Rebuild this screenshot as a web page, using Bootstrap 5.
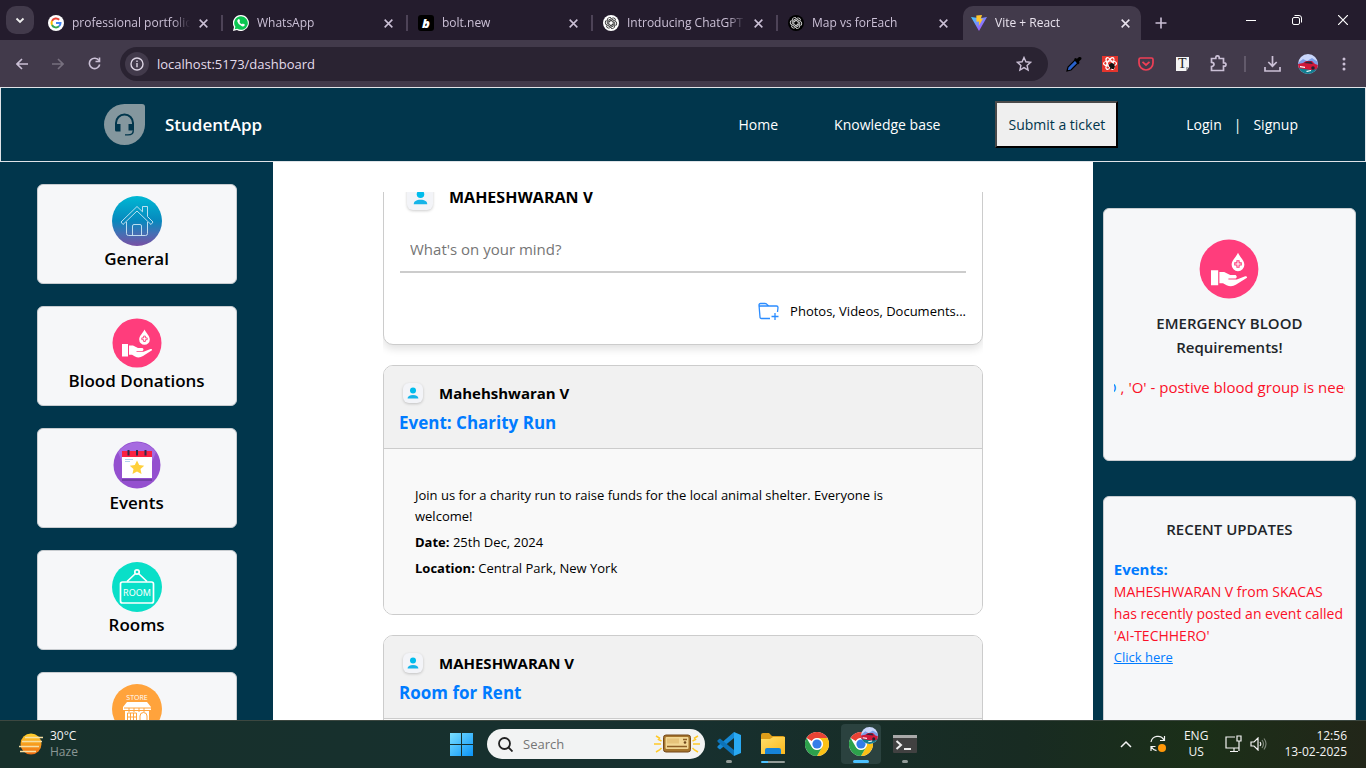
<!DOCTYPE html>
<html lang="en">
<head>
<meta charset="utf-8">
<meta name="viewport" content="width=device-width, initial-scale=1">
<title>Vite + React</title>
<link href="https://cdn.jsdelivr.net/npm/bootstrap@5.3.0/dist/css/bootstrap.min.css" rel="stylesheet">
<style>
:root{--navy:#01364c;--paper:#f6f7f9;--lilac:#cbc0d6;--link:#007bff}
body{font-family:"Open Sans","Noto Sans",sans-serif;font-size:15px;line-height:24px;color:#000}
button{padding:0;border:0;background:none;color:inherit;display:flex;align-items:center;justify-content:center;flex:none}
svg{display:block;flex:none}
/* browser tabs */
.tabstrip{height:40px;flex:none;background:#241c2d;color:var(--lilac);font-size:12px;line-height:16px}
.tab-search{width:28px;height:28px;border-radius:10px;background:#423a4b;margin:6px 4px 6px 6px;color:#eee}
.browser-tab{flex:0 1 185px;min-width:0;height:34px;padding:0 14px 0 10px}
.browser-tab:nth-child(-n+4){background:linear-gradient(#4d4357,#4d4357) right center/2px 16px no-repeat}
.tab-title{flex:1;min-width:0;overflow:hidden;white-space:nowrap;margin:0 8px;-webkit-mask-image:linear-gradient(90deg,#000 85%,transparent)}
.browser-tab.current{flex-basis:178px;background:#423a4b;border-radius:10px 10px 0 0;color:#e9e3ee;padding:0 10px 0 8px}
.winbtn{width:46px;height:40px;color:#fff}
.new-tab{width:24px}
/* toolbar */
.toolbar{height:47px;flex:none;background:#423a4b;color:var(--lilac);padding-right:4px}
.toolbtn{width:36px;height:36px}
.addressbar{height:34px;border-radius:17px;background:#2a2332;padding-left:5px;margin:0 8px}
.addressbar input{background:none;border:0;outline:0;color:#e4dcec;font-size:13px;padding:0;margin-left:8px}
.site-info{width:24px;height:24px;border-radius:50%;background:#423a4b}
.bookmark{width:48px}
/* app header */
.app-header{height:75px;border:1px solid #dfe3e8;background:var(--navy);color:#fff;padding:0 67px 0 103px}
.app-header a{color:#fff;text-decoration:none}
.app-header nav{font-size:14px}
.brand{font-size:17px;font-weight:600}
.ticket{height:47px;border:2px solid;border-color:#4a4a4a #000 #000 #4a4a4a;background:#efefef;color:#01364c;padding:0 11px;margin:0 68px 0 55px}
/* columns */
.side{flex:0 0 20%;background:var(--navy);overflow:hidden}
.side-left{padding-top:22px;gap:22px}
.side-right{padding:46px 10px 0;gap:35px}
.tile{width:200px;height:100px;background:var(--paper);border:1px solid #c8ccd0;border-radius:6px;color:#000;text-decoration:none;font-size:17px;font-weight:600;padding-top:11px;gap:1px;flex:none}
.info-card{background:var(--paper);border:1px solid #c8ccd0;border-radius:6px;height:253px;padding:0 10px;flex:none}
.blood-card{padding-top:30px}
.feed-window{max-width:600px;margin-top:30px;overflow:hidden}
.feed-scroll{margin-top:-32px}
.post{border:1px solid #ccc;border-radius:10px;overflow:hidden;margin-bottom:20px}
.composer{box-shadow:0 4px 8px rgba(0,0,0,.12);padding:16px}
.composer-name{height:40px;font-size:16px;padding-left:7px}
.composer input{height:46px;border:0;border-bottom:2px solid #ccc;padding:0 10px;width:100%;margin-top:10px;outline:0}
.composer input::placeholder{color:#757575}
.attach{font-size:13px;margin-top:21px;height:34px;gap:11px}
.avatar{border-radius:6px;background:#f3f4f8;box-shadow:0 1px 3px rgba(0,0,0,.2);display:flex;align-items:center;justify-content:center}
.avatar-lg{width:26px;height:26px}
.avatar-sm{width:20px;height:20px}
.post-head{background:#f1f1f1;border-bottom:1px solid #ccc;padding:15px 15px 12px;height:83px}
.post-head h2{font-size:17px;line-height:24px;font-weight:700;color:var(--link);margin:6px 0 0}
.post-body{background:#f9f9f9;padding:36px 31px 35px;font-size:13px;line-height:21px}
.post-body p{margin:0 0 5px}
.alert-red{color:#fb1028}
.link-blue{color:var(--link)}
.ticker{overflow:hidden;white-space:nowrap}
.ticker-text{margin-left:-8px}
.update{font-size:14px;line-height:22px}
.update-link{font-size:13px;line-height:20px}
/* taskbar */
.taskbar{height:48px;background:linear-gradient(90deg,#17302b,#17302f 50%,#182b22 75%,#1b2f18 88%,#222619);box-shadow:inset 0 1px #3c4740;color:#f4f4f4;font-size:12px;line-height:16px}
.weather{flex:1;padding-left:19px;margin-right:9px;gap:7px}
.tray{flex:1;padding-right:19px;gap:17px}
.start{margin-right:14px}
.searchbox{width:218px;height:30px;border-radius:15px;background:#f2f3f3;padding:0 5px 0 11px}
.searchbox input{width:80px;border:0;background:none;font-size:13px;padding:0;outline:0;margin-left:10px}
.taskbtn{width:40px;height:40px;border-radius:4px;position:relative}
.taskbtn.active{background:#2b423f}
.taskbtn.open::after{content:"";position:absolute;bottom:1px;width:6px;height:3px;border-radius:2px;background:#929b98}
.taskbtn.active::after{width:16px;background:#4cc2ff}
.taskbtn.multi::after{width:24px;height:2px;background:linear-gradient(90deg,#4cc2ff 7px,#929b98 7px)}
</style>
</head>
<body class="vh-100 overflow-hidden d-flex flex-column">
<svg width="0" height="0" class="position-absolute" aria-hidden="true">
<defs>
<linearGradient id="houseFill" x2="0" y2="1"><stop stop-color="#00b8d4"/><stop offset=".5" stop-color="#0788bd"/><stop offset=".75" stop-color="#456fb4"/><stop offset="1" stop-color="#7850a4"/></linearGradient>
<linearGradient id="winFill" x2="1" y2="1"><stop stop-color="#7be0ff"/><stop offset="1" stop-color="#0a94f8"/></linearGradient>
<linearGradient id="viteFill" x2="1" y2="1"><stop stop-color="#41d1ff"/><stop offset="1" stop-color="#bd34fe"/></linearGradient>
<linearGradient id="sunFill" x2="0" y2="1"><stop stop-color="#ffd02b"/><stop offset="1" stop-color="#ef6c12"/></linearGradient>
<linearGradient id="folderFill" x2="1" y2="1"><stop stop-color="#ffdf6b"/><stop offset="1" stop-color="#fcb81c"/></linearGradient>
<symbol id="x" viewBox="0 0 10 10"><path d="M1.500 1.500l7 7m0-7l-7 7" stroke="currentColor" stroke-width="1.400"/></symbol>
<symbol id="person" viewBox="0 0 16 16"><circle cx="8" cy="4.600" r="4" fill="#00bcec"/><path d="M.8 15.200c0-3 2.700-4.700 7.200-4.700s7.200 1.700 7.200 4.700z" fill="#16b4e8"/></symbol>
<symbol id="blood" viewBox="0 0 50 50"><circle cx="25" cy="25" r="24.500" fill="#ff3d7c"/><path d="M10 26h6v12.500h-6zM17 27.500h4l5 2.500h4.500q2 1.500 0 3h-6v.8h7l7-2.800q2-.3 1.500 1.200l-9 5.800q-4 2.500-8 .5l-3-1.700h-3z" fill="#fff"/><path d="M32.500 11.500c2 4 5.300 6.500 5.300 10a5.300 5.300 0 0 1-10.600 0c0-3.500 3.300-6 5.300-10z" fill="#fff"/><path d="M31.600 18.100h1.800v1.800h1.800v1.800h-1.800v1.800h-1.800v-1.800h-1.800v-1.800h1.800z" fill="none" stroke="#ff3d7c" stroke-width=".9"/></symbol>
<symbol id="gpt" viewBox="0 0 16 16"><g fill="none" stroke="currentColor" stroke-width=".9"><path id="gp" d="M8 2.700c-2-.8-3.800.5-3.700 2.300v3.400L8 10.500"/><use href="#gp" transform="rotate(60 8 8)"/><use href="#gp" transform="rotate(120 8 8)"/><use href="#gp" transform="rotate(180 8 8)"/><use href="#gp" transform="rotate(240 8 8)"/><use href="#gp" transform="rotate(300 8 8)"/></g></symbol>
<symbol id="chrome" viewBox="0 0 24 24"><circle cx="12" cy="12" r="12" fill="#fff"/><path d="M1.600 6A12 12 0 0 1 22.400 6H12a6 6 0 0 0-5.200 3z" fill="#e94335"/><path d="M22.400 6A12 12 0 0 1 12 24l5.200-9A6 6 0 0 0 12 6z" fill="#fbc116"/><path d="M1.600 6l5.200 9a6 6 0 0 0 10.400 0L12 24A12 12 0 0 1 1.600 6z" fill="#2da14c"/><circle cx="12" cy="12" r="5.800" fill="#fff"/><circle cx="12" cy="12" r="4.600" fill="#347de9"/></symbol>
<symbol id="car" viewBox="0 0 20 20"><clipPath id="round"><circle cx="10" cy="10" r="10"/></clipPath><g clip-path="url(#round)"><path fill="#c9d6fb" d="M0 0h20v20H0z"/><path fill="#7d9de6" d="M0 9l5-4 4 2 5-3 6 4v4H0z"/><path fill="#127e91" d="M0 13h20v7H0z"/><path fill="#d0183a" d="M0 10l5-1 3-2h6l3 3 3 1v4l-7 1-13-2z"/><path fill="#26283f" d="M6 9l3-1.500h4l2 2.500z"/><path fill="#fff" d="M2 12l5 .7v1.300l-5-.7zM8 17l5-1v1l-4 1z"/><circle cx="15" cy="14" r="1.800" fill="#202334"/></g></symbol>
</defs>
</svg>

<div class="tabstrip d-flex align-items-end">
  <button class="tab-search" aria-label="Search tabs"><svg width="12" height="12"><path d="M2.500 4.500L6 8l3.500-3.500" fill="none" stroke="currentColor" stroke-width="1.800"/></svg></button>
  <div class="d-flex flex-grow-1">
    <div class="browser-tab d-flex align-items-center"><svg width="16" height="16" viewBox="0 0 16 16"><circle cx="8" cy="8" r="8" fill="#fff"/><g fill="none" stroke-width="2"><path d="M11.200 4.800A4.500 4.500 0 0 0 4 6" stroke="#ea4335"/><path d="M4 6a4.500 4.500 0 0 0 0 4" stroke="#fbbc05"/><path d="M4 10a4.500 4.500 0 0 0 7 1.300" stroke="#34a853"/><path d="M11 11.300A4.500 4.500 0 0 0 12.500 8H8" stroke="#4285f4"/></g></svg><span class="tab-title">professional portfolio</span><button aria-label="Close tab"><svg width="11" height="11"><use href="#x"/></svg></button></div>
    <div class="browser-tab d-flex align-items-center"><svg width="16" height="16" viewBox="0 0 16 16"><path d="M8 0a8 8 0 1 1-4 15L0 16l1-4A8 8 0 0 1 8 0z" fill="#fff"/><path d="M8 1.200A6.800 6.800 0 1 1 4.300 13.700L1.700 14.300l.7-2.500A6.800 6.800 0 0 1 8 1.200z" fill="#0bc651"/><path d="M5.200 4.200l1-.2.900 2-.7.900q.9 1.700 2.600 2.400l.8-.9 2 1-.2 1.200q-1 1.200-2.700.7Q5.300 10 4.300 6.600q-.2-1.500.9-2.400z" fill="#fff"/></svg><span class="tab-title">WhatsApp</span><button aria-label="Close tab"><svg width="11" height="11"><use href="#x"/></svg></button></div>
    <div class="browser-tab d-flex align-items-center"><svg width="16" height="16" viewBox="0 0 16 16"><rect width="16" height="16" rx="3"/><text x="4" y="12.500" font-size="13" font-weight="800" font-style="italic" fill="#fff" font-family="Open Sans">b</text></svg><span class="tab-title">bolt.new</span><button aria-label="Close tab"><svg width="11" height="11"><use href="#x"/></svg></button></div>
    <div class="browser-tab d-flex align-items-center"><svg width="16" height="16" viewBox="0 0 16 16" color="#333"><circle cx="8" cy="8" r="8" fill="#fff"/><use href="#gpt"/></svg><span class="tab-title">Introducing ChatGPT</span><button aria-label="Close tab"><svg width="11" height="11"><use href="#x"/></svg></button></div>
    <div class="browser-tab d-flex align-items-center"><svg width="16" height="16" viewBox="0 0 16 16" color="#ddd"><circle cx="8" cy="8" r="8" fill="#000"/><use href="#gpt"/></svg><span class="tab-title">Map vs forEach</span><button aria-label="Close tab"><svg width="11" height="11"><use href="#x"/></svg></button></div>
    <div class="browser-tab current d-flex align-items-center"><svg width="16" height="16" viewBox="0 0 16 16"><path d="M0 2l8 14 8-14-7 1.300z" fill="url(#viteFill)"/><path d="M5.300.6L11 0 9.800 4l2.200-.4L7.800 11l.4-4.600-2.700.4z" fill="#ffc52b"/></svg><span class="tab-title">Vite + React</span><button aria-label="Close tab"><svg width="11" height="11"><use href="#x"/></svg></button></div>
    <button class="new-tab ms-2" aria-label="New tab"><svg width="12" height="12"><path d="M6 .5v11M.5 6h11" stroke="currentColor" stroke-width="1.600"/></svg></button>
  </div>
  <button class="winbtn" aria-label="Minimize"><svg width="10" height="10"><path d="M0 5.500h10" stroke="currentColor"/></svg></button>
  <button class="winbtn" aria-label="Restore"><svg width="10" height="10" fill="none" stroke="currentColor"><rect x=".5" y="2.500" width="7" height="7" rx="1.500"/><path d="M2.500.5H7A2.500 2.500 0 0 1 9.500 3v4.500"/></svg></button>
  <button class="winbtn" aria-label="Close"><svg width="10" height="10"><path d="M0 0l10 10m0-10L0 10" stroke="currentColor" stroke-width="1.200"/></svg></button>
</div>

<div class="toolbar d-flex align-items-center">
  <button class="toolbtn ms-1" aria-label="Back"><svg width="12" height="12" fill="none" stroke="currentColor" stroke-width="1.600"><path d="M12 6H1.500M6 1L1 6l5 5"/></svg></button>
  <button class="toolbtn" aria-label="Forward" disabled><svg width="12" height="12" fill="none" stroke="#77707f" stroke-width="1.600"><path d="M0 6h10.500M6 1l5 5-5 5"/></svg></button>
  <button class="toolbtn" aria-label="Reload"><svg width="13" height="13" fill="none" stroke="currentColor" stroke-width="1.600"><path d="M11 3.600A5.200 5.200 0 1 0 11.700 7.500"/><path d="M11.500.5v4h-4"/></svg></button>
  <div class="addressbar d-flex align-items-center flex-grow-1">
    <button class="site-info" aria-label="Site information"><svg width="14" height="14" fill="none" stroke="#ddd5e4" stroke-width="1.400"><circle cx="7" cy="7" r="6"/><path d="M7 6v4.200M7 3.500v1.500"/></svg></button>
    <input class="flex-grow-1" type="text" aria-label="Address" value="localhost:5173/dashboard">
    <button class="bookmark" aria-label="Bookmark"><svg width="16" height="16" fill="none" stroke="currentColor" stroke-width="1.400"><path d="M8 1.500l1.900 4.300 4.700.5-3.500 3.100 1 4.600L8 11.600 3.900 14l1-4.600L1.400 6.300l4.700-.5z"/></svg></button>
  </div>
  <button class="toolbtn" aria-label="Color picker"><svg width="16" height="16"><path d="M1 15l1-4 7-7 3 3-7 7z" fill="#2a62cc" stroke="#000" stroke-width="1.200"/><path d="M8 3l1.500-1 1.500.800L13 1q3-.500 2.500 2L13 5.500l.500 1.500-1.500 1.500z"/></svg></button>
  <button class="toolbtn" aria-label="React tools"><svg width="16" height="16" fill="none" stroke="#fff" stroke-width="1.200"><path fill="#e5352d" stroke="none" d="M0 0h16v16H0z"/><ellipse cx="8" cy="7.500" rx="6.500" ry="2.500"/><ellipse cx="8" cy="7.500" rx="6.500" ry="2.500" transform="rotate(60 8 7.500)"/><ellipse cx="8" cy="7.500" rx="6.500" ry="2.500" transform="rotate(120 8 7.500)"/><ellipse cx="10" cy="10" rx="2.500" ry="3" fill="#111" stroke="none" transform="rotate(-40 10 10)"/><path d="M7 9l5 4m-4 0l4-5" stroke="#111"/></svg></button>
  <button class="toolbtn" aria-label="Pocket"><svg width="16" height="14" fill="none" stroke="#ef3f56" stroke-width="1.700"><path d="M2.500 1h11Q15 1 15 2.500V6A7 7 0 0 1 1 6V2.500Q1 1 2.500 1zM4.500 4.800L8 8l3.500-3.200"/></svg></button>
  <button class="toolbtn" aria-label="Text tool"><svg width="13" height="15"><path d="M0 1h13v10l-3 4H0z" fill="#f4f4f4"/><path d="M13 11h-3v4z" fill="#aaa"/><text x="2" y="12" font-family="Liberation Serif" font-size="14" fill="#222">T</text></svg></button>
  <button class="toolbtn" aria-label="Extensions"><svg width="17" height="17" fill="none" stroke="currentColor" stroke-width="1.700"><path d="M1.500 3.500h4.300v-1a1.700 1.700 0 0 1 3.400 0v1h4.300v4.300h.8a1.700 1.700 0 0 1 0 3.400h-.8v4.300h-12v-4q2.500-.3 2.500-2.200t-2.500-2z"/></svg></button>
  <svg width="18" height="16"><path d="M9 0v16" stroke="#625a6b" stroke-width="2"/></svg>
  <button class="toolbtn" aria-label="Downloads"><svg width="17" height="17" fill="none" stroke="currentColor" stroke-width="1.700"><path d="M8.500 1v10M4.300 7l4.200 4.200L12.700 7M1 12v4h15v-4"/></svg></button>
  <button class="toolbtn" aria-label="Profile"><svg width="20" height="20"><use href="#car"/></svg></button>
  <button class="toolbtn" aria-label="Menu"><svg width="4" height="16" fill="currentColor"><circle cx="2" cy="3" r="1.500"/><circle cx="2" cy="8" r="1.500"/><circle cx="2" cy="13" r="1.500"/></svg></button>
</div>

<header class="app-header d-flex align-items-center flex-shrink-0">
  <a href="#" class="d-flex align-items-center gap-3 me-auto"><svg class="me-1" width="41" height="41"><path d="M20.500 0H38q3 0 3 3v17.500A20.500 20.500 0 1 1 20.500 0z" fill="#84979e"/><path d="M11 20v-1a9.500 9.500 0 0 1 19 0v7.500h-5.500V20H28v-1a7.500 7.500 0 0 0-15 0v1h3.500v7.500H12.500Q11 27.500 11 26zM30 26.500q0 5-6 5h-3v-1.300h3q4.500 0 4.500-3.500z" fill="#01364c"/></svg><span class="brand">StudentApp</span></a>
  <nav class="d-flex align-items-center">
    <a href="#">Home</a><a href="#" class="ms-5 ps-2">Knowledge base</a>
    <button class="ticket">Submit a ticket</button>
    <a href="#">Login</a><span class="mx-2 px-1">|</span><a href="#">Signup</a>
  </nav>
</header>

<main class="d-flex flex-grow-1 overflow-hidden">
  <aside class="side side-left d-flex flex-column align-items-center">
    <a href="#" class="tile d-flex flex-column align-items-center"><svg width="50" height="50"><circle cx="25" cy="25" r="25" fill="url(#houseFill)"/><g fill="none" stroke="#cfe9f5" stroke-width=".9"><path d="M9 26L25 10.500l5.500 5.300V10.500h5v10L41 26l-2 2.500-14-13.500L11 28.500z"/><path d="M14.500 26v11.500q0 2 2 2h17q2 0 2-2V26M20.500 39.500V30q0-1.500 1.500-1.500h6q1.500 0 1.500 1.500v9.500"/></g></svg>General</a>
    <a href="#" class="tile d-flex flex-column align-items-center"><svg width="50" height="50"><use href="#blood"/></svg>Blood Donations</a>
    <a href="#" class="tile d-flex flex-column align-items-center"><svg width="50" height="50"><circle cx="25" cy="25" r="23.500" fill="#9450cf"/><path d="M6 12a23.500 23.500 0 0 1 38 0l-4 10-30 0z" fill="#a66be0"/><path d="M10 39h30v2H10z" fill="#7440a8"/><path d="M10 16h30v22H10z" fill="#fff"/><path d="M10 11h30v6H10z" fill="#fa2140"/><path d="M16.500 10v5.500M25 10v5.500M33.500 10v5.500" stroke="#302b48" stroke-width="2"/><path d="M13 19.500h8M13 21.500h5" stroke="#9cc9e8" stroke-width=".8"/><path d="M25 20.500l2.200 4.500 5 .700-3.700 3.400 1 4.900-4.500-2.500-4.500 2.500 1-4.900-3.700-3.400 5-.700z" fill="#ffd03b"/></svg>Events</a>
    <a href="#" class="tile d-flex flex-column align-items-center"><svg width="50" height="50"><circle cx="25" cy="25" r="25" fill="#09dfc8"/><g fill="none" stroke="#fff" stroke-width="1.700"><rect x="8.500" y="20" width="33" height="21" rx="2"/><circle cx="25" cy="10" r="2.200"/><path d="M15 19.500l8.500-8m3 0l8.500 8"/></g><text x="25" y="33.500" text-anchor="middle" font-size="9" font-weight="400" fill="#fff" font-family="Noto Sans">ROOM</text></svg>Rooms</a>
    <a href="#" class="tile d-flex flex-column align-items-center"><svg width="50" height="50"><circle cx="25" cy="25" r="25" fill="#ffa33c"/><text x="25" y="16" text-anchor="middle" font-size="7" font-weight="400" fill="#fff" font-family="Open Sans">STORE</text><path d="M15 18h20l4 5v3H11v-3zM13 27h24v17H13z" fill="#fff"/><path d="M12 24h27M17 28v-4m5 4v-4m5 4v-4m5 4v-4M15.500 29h9v8h-9zm0 4h9m-6-4v8m3-8v8M28 44V32a3.500 3.500 0 0 1 7 0v12" fill="none" stroke="#ffa33c"/></svg></a>
  </aside>

  <section class="flex-grow-1 bg-white overflow-hidden">
    <div class="feed-window mx-auto h-100">
      <div class="feed-scroll">
        <form class="post composer bg-white" onsubmit="return false">
          <div class="composer-name d-flex align-items-center"><span class="avatar avatar-lg"><svg width="15" height="15"><use href="#person"/></svg></span><strong class="ms-3">MAHESHWARAN V</strong></div>
          <input type="text" placeholder="What's on your mind?" aria-label="What's on your mind?">
          <div class="attach d-flex justify-content-end align-items-center"><svg width="21" height="18" fill="none" stroke="#2b8cff" stroke-width="1.300"><path d="M12 16.500H3.500Q2 16.500 2 15L1 3q0-1.500 1.500-1.500H7Q8.500 1.500 9.500 3L11 4h7.500q1.500 0 1.500 1.500L19.500 10M1 5q0-1 1.500-1H11M17 11v7M13.500 14.500h7"/></svg><span>Photos, Videos, Documents...</span></div>
        </form>
        <article class="post">
          <div class="post-head"><div class="d-flex align-items-center ps-1"><span class="avatar avatar-sm"><svg width="12" height="12"><use href="#person"/></svg></span><strong class="ms-3">Mahehshwaran V</strong></div><h2>Event: Charity Run</h2></div>
          <div class="post-body"><p>Join us for a charity run to raise funds for the local animal shelter. Everyone is<br>welcome!</p><p><b>Date:</b> 25th Dec, 2024</p><p class="mb-0"><b>Location:</b> Central Park, New York</p></div>
        </article>
        <article class="post">
          <div class="post-head"><div class="d-flex align-items-center ps-1"><span class="avatar avatar-sm"><svg width="12" height="12"><use href="#person"/></svg></span><strong class="ms-3">MAHESHWARAN V</strong></div><h2>Room for Rent</h2></div>
          <div class="post-body"></div>
        </article>
      </div>
    </div>
  </section>

  <aside class="side side-right d-flex flex-column">
    <section class="info-card blood-card text-center">
      <svg class="mx-auto" width="60" height="60"><use href="#blood"/></svg>
      <div class="fw-semibold text-dark mt-2 pt-1">EMERGENCY BLOOD<br>Requirements!</div>
      <div class="ticker alert-red text-start mt-3"><div class="ticker-text"><span class="link-blue">D</span> , 'O' - postive blood group is needed</div></div>
    </section>
    <section class="info-card">
      <div class="fw-semibold text-dark text-center mt-3 pt-1">RECENT UPDATES</div>
      <div class="fw-bold link-blue mt-3">Events:</div>
      <div class="update alert-red">MAHESHWARAN V from SKACAS<br>has recently posted an event called<br>'AI-TECHHERO'</div>
      <div class="update-link"><a href="#" class="link-blue">Click here</a></div>
    </section>
  </aside>
</main>

<footer class="taskbar d-flex align-items-center flex-shrink-0">
  <div class="weather d-flex align-items-center"><svg width="24" height="24"><circle cx="12" cy="12" r="10.500" fill="url(#sunFill)"/><path d="M6 5.500h18M3 9.500h20M0 14.500h20M1 19.500h16" stroke="#f6dfa4" stroke-width="1.600"/></svg><div>30°C<br><span class="text-white-50">Haze</span></div></div>
  <div class="d-flex align-items-center">
    <button class="start" aria-label="Start"><svg width="23" height="23" fill="url(#winFill)"><path d="M0 0h11v11H0zM12 0h11v11H12zM0 12h11v11H0zM12 12h11v11H12z"/></svg></button>
    <div class="searchbox d-flex align-items-center"><svg width="15" height="15" fill="none" stroke="#222" stroke-width="1.800"><circle cx="6.500" cy="6.500" r="5.500"/><path d="M10.500 10.500l4 4"/></svg><input type="text" placeholder="Search" aria-label="Search"><svg class="ms-auto" width="46" height="22"><path d="M2 3l3.500 2-1 1.500 3 1.500M0 11h7M2 19l3.500-2 2-2M44 3l-3.500 2 1 1.500-3 1.500M46 11h-7M44 19l-3.500-2-2-2" fill="none" stroke="#ffc928" stroke-width="1.500"/><rect x="9.500" y="2" width="27" height="17" rx="2.500" fill="#a5742c" stroke="#75491a"/><rect x="11.500" y="4" width="23" height="12" rx="1" fill="#f2d794"/><path d="M13 13.500h20M29 6.500h4" stroke="#8d5f26" stroke-width="1.500"/><path d="M13 5.500h12v5H13z" fill="#e6c37a"/><circle cx="31" cy="9.500" r="1.300" fill="#6e471c"/></svg></div>
    <button class="taskbtn open ms-1" aria-label="VS Code"><svg width="24" height="24"><path d="M17 0l7 3v18l-7 3z" fill="#29a9f2"/><path d="M17 0v6L3 17.500l-2.500-1.800v-1.500z" fill="#1689d5"/><path d="M17 24v-6L3 6.500.500 8.300v1.500z" fill="#0d73b9"/></svg></button>
    <button class="taskbtn open multi ms-1" aria-label="Files"><svg width="24" height="22"><path d="M0 2q0-2 2-2h6l3 3h11q2 0 2 2v6H0z" fill="#dc9c19"/><path d="M0 6h9l3-2h12v17H0z" fill="url(#folderFill)"/><path d="M4 21v-4q0-2 2-2h12q2 0 2 2v4z" fill="#1683d8"/></svg></button>
    <button class="taskbtn ms-1" aria-label="Chrome"><svg width="24" height="24"><use href="#chrome"/></svg></button>
    <button class="taskbtn open active ms-1" aria-label="Chrome profile"><svg width="34" height="34"><use href="#chrome" x="5" y="5" width="24" height="24"/><use href="#car" x="17" y="0" width="17" height="17"/></svg></button>
    <button class="taskbtn open ms-1" aria-label="Terminal"><svg width="24" height="18"><rect width="24" height="18" rx="1" fill="#414141"/><path d="M0 0h24v3H0z" fill="#a9a9a9"/><path d="M3.500 6l4.500 4-4.500 4M11 14h7" fill="none" stroke="#eee" stroke-width="2"/></svg></button>
  </div>
  <div class="tray d-flex align-items-center justify-content-end">
    <svg width="12" height="8" fill="none" stroke="currentColor" stroke-width="1.500"><path d="M1 7l5-5 5 5"/></svg>
    <svg width="18" height="18" fill="none" stroke="currentColor" stroke-width="1.200"><path d="M2 7a7 7 0 0 1 13-2M15.500 1v4.500H11M2 16v-4.500h4.500M2.500 12q1.500 3 5 3.700"/><circle cx="13" cy="13" r="4" fill="#ff9809" stroke="none"/></svg>
    <div class="text-center">ENG<br>US</div>
    <div class="d-flex align-items-center gap-2"><svg width="17" height="18" fill="none" stroke="currentColor" stroke-width="1.200"><path d="M10 2H1v11h13v-3M5 16.500h8M9 13v3M12 1h4v5h-4zM14 6v10"/></svg>
    <svg width="17" height="14" fill="none" stroke="currentColor" stroke-width="1.200"><path d="M1 5h3l4-4v12L4 9H1zM10 5q1.500 2 0 4"/><path d="M12 3q3 4 0 8M14 1.500q4 5 0 11" stroke="#7c8578"/></svg></div>
    <div class="text-end">12:56<br>13-02-2025</div>
  </div>
</footer>
<script src="https://cdn.jsdelivr.net/npm/bootstrap@5.3.0/dist/js/bootstrap.bundle.min.js"></script>
</body>
</html>
